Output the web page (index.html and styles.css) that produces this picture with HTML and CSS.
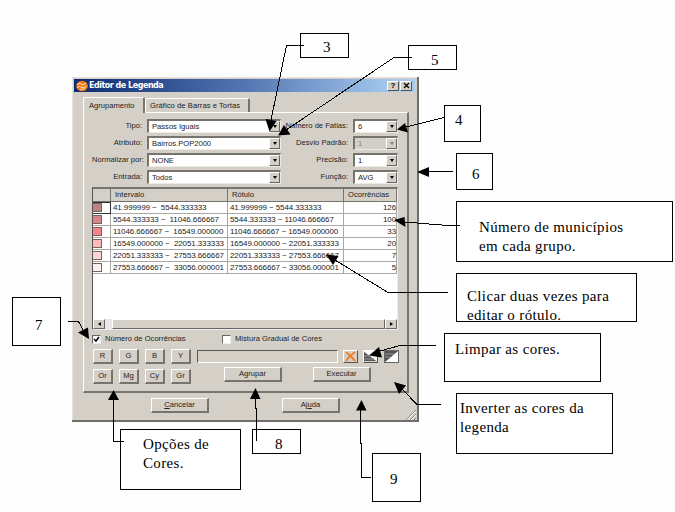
FILE: index.html
```html
<!DOCTYPE html>
<html lang="pt">
<head>
<meta charset="utf-8">
<title>Editor de Legenda</title>
<link rel="stylesheet" href="styles.css">
</head>
<body>
<main class="canvas">
  <section class="dialog">
    <header class="titlebar">
      <svg class="logo" viewBox="0 0 12 12"><ellipse cx="6" cy="6" rx="5.8" ry="5.2" fill="#f07818"/><path d="M1 5q2-3 4-1t5-1M1 8q2-3 4-1t6-1M4 10q2-2 5-1" fill="none" stroke="#ffe0b0" stroke-width="1"/></svg>
      <h1 class="title">Editor de Legenda</h1>
      <span class="winbtn">?</span>
      <span class="winbtn"><svg viewBox="0 0 7 7" width="7" height="7"><path d="M1 1l5 5M6 1l-5 5" stroke="#000" stroke-width="1.2"/></svg></span>
    </header>
    <nav class="tabs"><span class="tab active">Agrupamento</span><span class="tab second">Gráfico de Barras e Tortas</span></nav>
    <div class="panel">
      <div class="fields">
        <label>Tipo:</label><span class="combo">Passos Iguais<i></i></span><label>Número de Fatias:</label><span class="combo">6<i></i></span>
        <label>Atributo:</label><span class="combo">Bairros.POP2000<i></i></span><label>Desvio Padrão:</label><span class="combo disabled">1<i></i></span>
        <label>Normalizar por:</label><span class="combo">NONE<i></i></span><label>Precisão:</label><span class="combo">1<i></i></span>
        <label>Entrada:</label><span class="combo">Todos<i></i></span><label>Função:</label><span class="combo">AVG<i></i></span>
      </div>
      <div class="list">
        <div class="row head"><span></span><span>Intervalo</span><span>Rótulo</span><span>Ocorrências</span></div>
        <div class="row"><span class="focus"><b class="swatch s1"></b></span><span>41.999999 ~&nbsp; 5544.333333</span><span>41.999999 ~ 5544.333333</span><span class="num">126</span></div>
        <div class="row"><span><b class="swatch s2"></b></span><span>5544.333333 ~&nbsp; 11046.666667</span><span>5544.333333 ~ 11046.666667</span><span class="num">100</span></div>
        <div class="row"><span><b class="swatch s3"></b></span><span>11046.666667 ~&nbsp; 16549.000000</span><span>11046.666667 ~ 16549.000000</span><span class="num">33</span></div>
        <div class="row"><span><b class="swatch s4"></b></span><span>16549.000000 ~&nbsp; 22051.333333</span><span>16549.000000 ~ 22051.333333</span><span class="num">20</span></div>
        <div class="row"><span><b class="swatch s5"></b></span><span>22051.333333 ~&nbsp; 27553.666667</span><span>22051.333333 ~ 27553.666667</span><span class="num">7</span></div>
        <div class="row"><span><b class="swatch s6"></b></span><span>27553.666667 ~&nbsp; 33056.000001</span><span>27553.666667 ~ 33056.000001</span><span class="num">5</span></div>
        <div class="scroll"><span class="arrow left"></span><span class="track"></span><span class="thumb"></span><span class="arrow right"></span></div>
      </div>
      <div class="checks">
        <label class="check"><span class="box"><svg viewBox="0 0 7 7" width="7" height="7"><path d="M1 3l2 2 3-4" fill="none" stroke="#000" stroke-width="1.5"/></svg></span>Número de Ocorrências</label>
        <label class="check"><span class="box"></span>Mistura Gradual de Cores</label>
      </div>
      <div class="tools">
        <div class="keys"><span class="btn">R</span><span class="btn">G</span><span class="btn">B</span><span class="btn">Y</span><span class="btn">Or</span><span class="btn">Mg</span><span class="btn">Cy</span><span class="btn">Gr</span></div>
        <div class="side">
          <div class="ramp">
            <span class="bar"></span>
            <span class="icon"><svg viewBox="0 0 13 11"><path d="M2 1q5 4 9 9M11 1q-6 4-9 9" stroke="#f47a20" stroke-width="1.8" fill="none"/></svg></span>
            <span class="icon"><svg viewBox="0 0 13 11"><path d="M0 0L13 10V0z" fill="#fff"/><path d="M0 1L12 10H0z" fill="#555"/><path d="M0 5h7M0 8h10" stroke="#999"/></svg></span>
            <span class="icon last"><svg viewBox="0 0 13 11"><path d="M13 0V11H0z" fill="#fff"/><path d="M0 0H13L0 11z" fill="#555"/><path d="M0 3h9M0 6h5" stroke="#999"/></svg></span>
          </div>
          <div class="actions"><span class="btn">Agrupar</span><span class="btn">Executar</span></div>
        </div>
      </div>
    </div>
    <footer class="footer"><span class="btn"><span><u>C</u>ancelar</span></span><span class="btn"><span>Aj<u>u</u>da</span></span></footer>
    <svg class="grip" viewBox="0 0 11 11"><path d="M1 11L11 1M5 11l6-6M9 11l2-2" stroke="#858078"/><path d="M2 11l9-9M6 11l5-5" stroke="#fff"/></svg>
  </section>

  <aside class="note n3">3</aside>
  <aside class="note n5">5</aside>
  <aside class="note n4">4</aside>
  <aside class="note n6">6</aside>
  <aside class="note count">Número de municípios<br>em cada grupo.</aside>
  <aside class="note click">Clicar duas vezes para<br>editar o rótulo.</aside>
  <aside class="note clear">Limpar as cores.</aside>
  <aside class="note invert">Inverter as cores da<br>legenda</aside>
  <aside class="note options">Opções de<br>Cores.</aside>
  <aside class="note n8">8</aside>
  <aside class="note n9">9</aside>
  <aside class="note n7">7</aside>

  <svg class="arrows" viewBox="0 0 675 512" width="675" height="512">
    <g fill="none" stroke="#000" stroke-width="1" shape-rendering="crispEdges">
      <path d="M304 45.5H286.500L271 120"/>
      <path d="M412 57.500H394L286 130"/>
      <path d="M444 117.500L406 127"/>
      <path d="M453 171.500H428"/>
      <path d="M460 225.500H448L404 222"/>
      <path d="M448 292.500H388L335 260"/>
      <path d="M68 321.500H78.500L84 332"/>
      <path d="M436 345.500H400L380 351"/>
      <path d="M441 404.500H417L402 389"/>
      <path d="M124 441.500H113.500V399"/>
      <path d="M256.500 441V408H255.500V398"/>
      <path d="M371 477.500H361.500V443H360.500V409"/>
    </g>
    <g>
      <path d="M265.500 119L276.500 121L269.500 131.500z"/>
      <path d="M284 125L290.500 134.500L278 135.500z"/>
      <path d="M405 123L408 132.500L397 129.500z"/>
      <path d="M417 172L429 167V177z"/>
      <path d="M394 220L404.500 217L405.500 227z"/>
      <path d="M326 254.500L338.500 256L333 265z"/>
      <path d="M88 327.500L89 339L78 332.500z"/>
      <path d="M369 355.500L379 347L382 357.500z"/>
      <path d="M394 382L406 385.500L399 394z"/>
      <path d="M113.500 390L119 400H108z"/>
      <path d="M255.500 388L260.500 399H250z"/>
      <path d="M361.500 400L366.500 410.500H356z"/>
    </g>
  </svg>
</main>
</body>
</html>
```
FILE: styles.css
```css
* { box-sizing: border-box; }
body { margin: 0; background: #fefefe; }
.canvas { position: relative; width: 675px; height: 512px; overflow: hidden; }

.dialog {
  position: absolute; left: 72px; top: 77px; width: 347px; height: 345px;
  display: flex; flex-direction: column;
  padding: 2px 2px 0;
  background: #d4d0c8;
  border-right: 2px solid #706d6a; border-bottom: 2px solid #706d6a;
  box-shadow: inset 1px 1px #e6e3dd;
  font: 7.6px/10px "Liberation Sans", Arial, sans-serif; color: #222;
  white-space: nowrap;
}
.titlebar {
  flex: none; display: flex; align-items: center; height: 13px; padding: 0 3px 0 2px;
  background: linear-gradient(90deg, #0c2a70, #5475b2 50%, #a6caf0 94%);
}
.logo { width: 12px; height: 12px; margin-right: 1px; }
.title { flex: 1; margin: 0; color: #fff; font: bold 8px/12px "DejaVu Sans", sans-serif; letter-spacing: -.48px; }
.winbtn {
  display: flex; align-items: center; justify-content: center; width: 12px; height: 10px; margin-left: 1px;
  background: #d4d0c8; border: 1px solid; border-color: #fff #555 #555 #fff; color: #000; font: bold 8px/8px "Liberation Sans", sans-serif;
}
.tabs { flex: none; display: flex; align-items: flex-end; height: 20px; margin: 0 9px; }
.tab { display: flex; align-items: center; border: solid; border-width: 1px 2px 0 1px; border-color: #fff #77736e #fff #fff; border-radius: 2px 2px 0 0; }
.active { width: 62px; height: 16px; padding-left: 5px; margin-bottom: -1px; background: #d4d0c8; z-index: 1; }
.second { width: 105px; height: 14px; padding-left: 4px; letter-spacing: .06px; }
.panel {
  flex: none; width: 326px; height: 281px; margin-left: 9px; padding: 6px 8px 0;
  border: solid; border-width: 1px 2px 2px 1px; border-color: #fff #77736e #77736e #fff;
}
.fields { display: grid; grid-template-columns: 55px 134px 72px 45px; grid-auto-rows: 14px; row-gap: 3px; align-items: center; }
.fields label { text-align: right; padding-right: 5px; }
.combo {
  display: flex; align-items: center; justify-content: space-between; height: 14px; padding-left: 3px;
  background: #fff; border: solid; border-width: 2px 1px 1px 2px; border-color: #77736e #eeebe5 #eeebe5 #77736e;
}
.combo i {
  width: 11px; height: 11px; display: flex; align-items: center; justify-content: center;
  background: #d4d0c8; border: 1px solid; border-color: #fff #666 #666 #fff;
}
.combo i::before { content: ""; border: solid transparent; border-width: 3px 2.5px 0; border-top-color: #000; }
.disabled { background: #d4d0c8; color: #858078; }
.disabled i::before { border-top-color: #858078; }

.list {
  display: flex; flex-direction: column; width: 306px; height: 143px; margin-top: 3px;
  background: #fff; border: solid; border-width: 2px 1px 1px; border-color: #77736e #eee #eee #555;
}
.row { display: grid; grid-template-columns: 18px 117px 116px 53px; height: 12.1px; font-size: 8px; letter-spacing: -.1px; }
.row > span { border: solid #aaa8a4; border-width: 0 1px 1px 0; padding-left: 2px; line-height: 11.5px; }
.head { height: 12.5px; font-size: 7.6px; letter-spacing: 0; }
.head > span { background: #d4d0c8; border-color: #77736e; padding-left: 4px; }
.row > :first-child { padding: 1px 0 0; }
.row > .focus { border: solid #333; border-width: 1px 1px 1px 0; padding-top: 0; }
.row > .num { text-align: right; padding-right: 0; }
.swatch { display: block; width: 9px; height: 9px; border: solid #77605f; border-width: 1px 1px 1px 0; }
.s1 { background: #b88484; } .s2 { background: #d98486; } .s3 { background: #f48486; }
.s4 { background: #ffb9ba; } .s5 { background: #ffd5d5; } .s6 { background: #fff0f0; }
.scroll { display: flex; height: 10px; margin-top: auto; background: #d4d0c8; }
.arrow { display: flex; align-items: center; justify-content: center; width: 12px; border: 1px solid; border-color: #fff #666 #666 #fff; }
.left::before { content: ""; border: solid transparent; border-width: 2.5px 3px 2.5px 0; border-right-color: #000; }
.right::before { content: ""; border: solid transparent; border-width: 2.5px 0 2.5px 3px; border-left-color: #000; }
.track { width: 7px; background: #eae8e4; }
.thumb { flex: 1; border: 1px solid; border-color: #fff #666 #666 #fff; }

.checks { display: flex; height: 10px; margin-top: 4px; }
.check { display: flex; align-items: center; width: 130px; }
.box { width: 9px; height: 9px; margin-right: 4px; background: #fff; border: 1px solid; border-color: #666 #eee #eee #666; }
.box svg { display: block; }
.tools { display: flex; margin: 5px 0 0 1px; }
.keys { display: grid; grid-template-columns: repeat(4, 20px); grid-auto-rows: 15px; gap: 5px 6px; }
.btn {
  display: flex; align-items: center; justify-content: center; height: 15px;
  border: solid; border-width: 1px 2px 2px 1px; border-color: #fff #77736e #77736e #fff;
}
.side { margin-left: 6px; }
.ramp { display: flex; height: 13px; margin-top: 1px; }
.bar { width: 141px; border: 1px solid; border-color: #555 #fff #fff #555; margin-right: 5px; }
.icon { width: 15px; height: 13px; margin-right: 5px; border: 1px solid; border-color: #fff #555 #555 #fff; }
.last { margin: 0 0 0 1px; border-color: #666; }
.icon svg { display: block; width: 13px; height: 11px; }
.actions { display: flex; gap: 31px; margin: 4px 0 0 27px; }
.actions .btn, .footer .btn { width: 58px; }
.footer { flex: none; display: flex; gap: 73px; margin: 5px 0 0 77px; }
.grip { position: absolute; right: 1px; bottom: 0; width: 11px; height: 11px; }

.note {
  position: absolute; border: 1px solid #000; background: #fff; color: #000; overflow: hidden;
  font: 15px/19px "Liberation Serif", "Times New Roman", serif; letter-spacing: .35px; white-space: nowrap;
}
.n3 { left: 300px; top: 33px; width: 49px; height: 25px; padding: 4px 0 0 22px; }
.n5 { left: 408px; top: 45px; width: 49px; height: 25px; padding: 5px 0 0 22px; }
.n4 { left: 444px; top: 105px; width: 37px; height: 37px; padding: 5px 0 0 10px; }
.n6 { left: 456px; top: 153px; width: 37px; height: 37px; padding: 11px 0 0 15px; }
.count { left: 456px; top: 201px; width: 217px; height: 61px; padding: 16px 0 0 22px; }
.click { left: 456px; top: 273px; width: 181px; height: 49px; padding: 13px 0 0 10px; }
.clear { left: 444px; top: 333px; width: 157px; height: 49px; padding: 6px 0 0 10px; }
.invert { left: 456px; top: 393px; width: 157px; height: 61px; padding: 5px 0 0 3px; }
.options { left: 120px; top: 429px; width: 121px; height: 61px; padding: 5px 0 0 22px; }
.n8 { left: 252px; top: 429px; width: 49px; height: 25px; padding: 5px 0 0 22px; }
.n9 { left: 372px; top: 453px; width: 49px; height: 49px; padding: 16px 0 0 17px; }
.n7 { left: 12px; top: 297px; width: 49px; height: 49px; padding: 18px 0 0 22px; }
.arrows { position: absolute; left: 0; top: 0; }
```
